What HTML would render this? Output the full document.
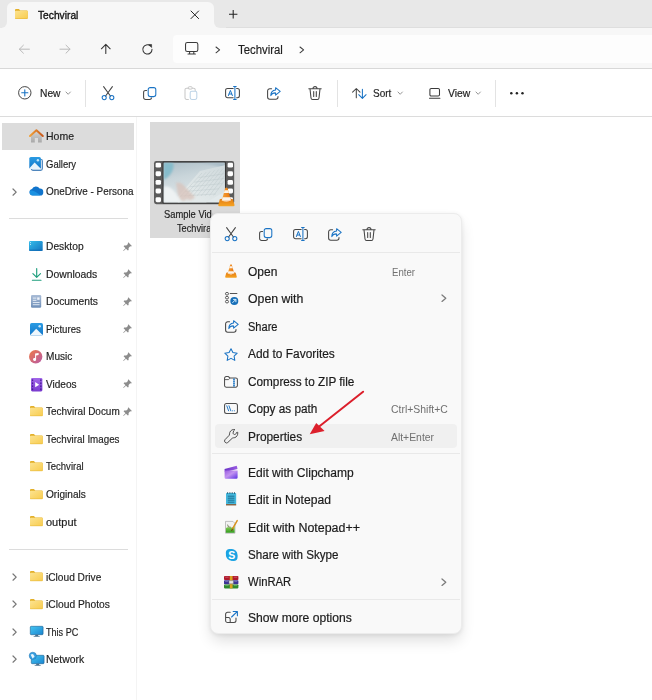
<!DOCTYPE html>
<html><head><meta charset="utf-8"><title>Techviral</title>
<style>
*{box-sizing:border-box;margin:0;padding:0}
html,body{width:652px;height:700px;overflow:hidden;background:#fff}
body{position:relative;font-family:"Liberation Sans",sans-serif;font-size:12px;color:#1b1b1b}
.abs{position:absolute}
.t{position:absolute;white-space:nowrap;line-height:16px;height:16px;transform-origin:0 50%}
svg{position:absolute;overflow:visible}
#titlebar{left:0;top:0;width:652px;height:28px;background:#e8e8e8;border-bottom:1px solid #dedede}
#tab{left:7px;top:2px;width:206.5px;height:26px;background:#f7f7f7;border-radius:6px 6px 0 0}
#nav{left:0;top:28px;width:652px;height:40px;background:#f7f7f7}
#navline{left:0;top:68px;width:652px;height:1px;background:#d8d8d8}
#addr{left:173.4px;top:35.2px;width:479px;height:27.4px;background:#fdfdfd;border-radius:4px 0 0 4px}
#toolline{left:0;top:116px;width:652px;height:1px;background:#dcdcdc}
#sideline{left:136px;top:117px;width:1px;height:583px;background:#f4f4f4}
.sep{position:absolute;height:1px;background:#dcdcdc}
.vsep{position:absolute;width:1px;background:#e3e3e3}
#sel{left:2px;top:122.6px;width:132px;height:27px;background:#dcdcdc}
#tile{left:150px;top:122.4px;width:90.3px;height:115.3px;background:#dadada}
#menu{left:210.3px;top:212.6px;width:251.5px;height:421px;background:#f9f9f9;border-radius:8px;border:1px solid #ececec;box-shadow:0 8px 15px -2px rgba(0,0,0,.14),0 1px 4px rgba(0,0,0,.07)}
#hover{left:215px;top:424px;width:242px;height:24px;background:#f0f0f0;border-radius:4px}
</style></head><body>
<div class="abs" id="titlebar"></div>
<div class="abs" id="tab"></div>
<div class="abs" id="nav"></div>
<div class="abs" id="addr"></div>
<div class="abs" id="navline"></div>
<div class="abs" id="toolline"></div>
<div class="abs" id="sideline"></div>
<div class="abs" id="sel"></div>
<div class="abs" id="tile"></div>
<div class="sep" style="left:9px;top:218px;width:119px"></div>
<div class="sep" style="left:9px;top:549px;width:119px"></div>
<div class="vsep" style="left:85.3px;top:80px;height:27px"></div>
<div class="vsep" style="left:337px;top:80px;height:27px"></div>
<div class="vsep" style="left:495px;top:80px;height:27px"></div>
<svg width="0" height="0" style="position:absolute"><defs><linearGradient id="gFold" x1="0" y1="0" x2="1" y2="1"><stop offset="0" stop-color="#fce391"/><stop offset="1" stop-color="#f8cc4e"/></linearGradient></defs></svg>
<div class="abs" style="left:2px;top:22px;width:5px;height:6px;background:#f7f7f7"></div><div class="abs" style="left:0;top:16px;width:7px;height:12px;background:#e8e8e8;border-radius:0 0 6px 0"></div>
<div class="abs" style="left:213.5px;top:22px;width:6px;height:6px;background:#f7f7f7"></div><div class="abs" style="left:213.5px;top:16px;width:12px;height:12px;background:#e8e8e8;border-radius:0 0 0 6px"></div>
<svg style="left:15.4px;top:9.4px" width="12.7" height="9.8" viewBox="0 0 12.7 9.8" fill="none"><path d="M0 1 A1 1 0 0 1 1 0 H3.9 L5.3 1.5 H11.9 A0.8 0.8 0 0 1 12.7 2.3 V9 A0.8 0.8 0 0 1 11.9 9.8 H0.8 A0.8 0.8 0 0 1 0 9 Z" fill="#e3b02a"/><path d="M0 2.5 A0.8 0.8 0 0 1 0.8 1.7 H11.9 A0.8 0.8 0 0 1 12.7 2.5 V9 A0.8 0.8 0 0 1 11.9 9.8 H0.8 A0.8 0.8 0 0 1 0 9 Z" fill="url(#gFold)"/><path d="M0.3 9.5 H12.4" stroke="#e9bb3c" stroke-width="0.6"/></svg>
<svg style="left:191.4px;top:10.7px" width="7.6" height="7.6" viewBox="0 0 7.6 7.6" fill="none"><path d="M0 0 L7.6 7.6 M7.6 0 L0 7.6" stroke="#222" stroke-width="1" stroke-linecap="round"/></svg>
<svg style="left:229.1px;top:10.4px" width="8.4" height="8.4" viewBox="0 0 8.4 8.4" fill="none"><path d="M4.2 0 V8.4 M0 4.2 H8.4" stroke="#222" stroke-width="1.05"/></svg>
<svg style="left:18.5px;top:44.6px" width="10.4" height="8.4" viewBox="0 0 10.4 8.4" fill="none"><path d="M10.4 4.2 H0.4 M4.4 0.2 L0.4 4.2 L4.4 8.2" stroke="#b9b9b9" stroke-width="1" stroke-linecap="round" stroke-linejoin="round"/></svg>
<svg style="left:59.9px;top:44.6px" width="10.4" height="8.4" viewBox="0 0 10.4 8.4" fill="none"><path d="M0 4.2 H10 M6 0.2 L10 4.2 L6 8.2" stroke="#b9b9b9" stroke-width="1" stroke-linecap="round" stroke-linejoin="round"/></svg>
<svg style="left:101px;top:44.2px" width="9.6" height="9.8" viewBox="0 0 9.6 9.8" fill="none"><path d="M4.8 9.6 V0.5 M0.4 4.8 L4.8 0.4 L9.2 4.8" stroke="#333" stroke-width="1.05" stroke-linecap="round" stroke-linejoin="round"/></svg>
<svg style="left:142.3px;top:43.6px" width="11" height="10.6" viewBox="0 0 11 10.6" fill="none"><path d="M10 5.4 A4.6 4.6 0 1 1 8.2 1.8" stroke="#333" stroke-width="1.05" stroke-linecap="round"/><path d="M6.6 0.5 H9.6 V3.5 Z" fill="#333" stroke="#333" stroke-width="0.6" stroke-linejoin="round"/></svg>
<svg style="left:185px;top:42px" width="13.4" height="12.6" viewBox="0 0 13.4 12.6" fill="none"><rect x="0.55" y="0.55" width="12.3" height="8.9" rx="1.8" stroke="#3a3a3a" stroke-width="1.05"/><path d="M4.6 9.6 V11.8 M8.8 9.6 V11.8 M3 12 H10.4" stroke="#3a3a3a" stroke-width="1.05" stroke-linecap="round"/></svg>
<svg style="left:216px;top:46.7px" width="3.6" height="5.8" viewBox="0 0 3.6 5.8" fill="none"><path d="M0 0 L3.6 2.9 L0 5.8" stroke="#3c3c3c" stroke-width="1.05" stroke-linecap="round" stroke-linejoin="round"/></svg>
<svg style="left:299.6px;top:46.7px" width="3.6" height="5.8" viewBox="0 0 3.6 5.8" fill="none"><path d="M0 0 L3.6 2.9 L0 5.8" stroke="#3c3c3c" stroke-width="1.05" stroke-linecap="round" stroke-linejoin="round"/></svg>
<svg style="left:18.3px;top:86px" width="13.6" height="13.6" viewBox="0 0 13.6 13.6" fill="none"><circle cx="6.8" cy="6.8" r="6.2" stroke="#444" stroke-width="1"/><path d="M6.8 3.7 V9.9 M3.7 6.8 H9.9" stroke="#1a73c4" stroke-width="1.1" stroke-linecap="round"/></svg>
<svg style="left:65.8px;top:92.15px" width="4.4" height="2.3" viewBox="0 0 4.4 2.3" fill="none"><path d="M0 0 L2.2 2.3 L4.4 0" stroke="#8a8a8a" stroke-width="0.9" stroke-linecap="round" stroke-linejoin="round"/></svg>
<svg style="left:101.4px;top:85.8px" width="14" height="14" viewBox="0 0 14 14" fill="none"><path d="M2.6 0.6 L9.6 10.2 M11.4 0.6 L4.4 10.2" stroke="#454545" stroke-width="1.05" stroke-linecap="round"/><circle cx="3.2" cy="11.6" r="2.05" stroke="#1a73c4" stroke-width="1.05"/><circle cx="10.8" cy="11.6" r="2.05" stroke="#1a73c4" stroke-width="1.05"/></svg>
<svg style="left:142.9px;top:86.5px" width="14" height="13" viewBox="0 0 14 13" fill="none"><path d="M3.6 3.4 H2.6 A2 2 0 0 0 0.6 5.4 V10.4 A2 2 0 0 0 2.6 12.4 H6.6 A2 2 0 0 0 8.6 10.9" stroke="#454545" stroke-width="1.05" stroke-linecap="round"/><rect x="5.2" y="0.6" width="7.6" height="9" rx="2" stroke="#1a73c4" stroke-width="1.05"/></svg>
<svg style="left:184.3px;top:86px" width="14" height="14" viewBox="0 0 14 14" fill="none"><path d="M5 2.2 H2.6 A1.6 1.6 0 0 0 1 3.8 V11.8 A1.6 1.6 0 0 0 2.6 13.4 H4.4 M8.4 2.2 H9.6 A1.6 1.6 0 0 1 11.2 3.8 V4.6" stroke="#c9c9c9" stroke-width="1.05" stroke-linecap="round"/><rect x="4.2" y="0.7" width="4" height="2.4" rx="1.1" stroke="#c9c9c9" stroke-width="1"/><rect x="6.2" y="5.2" width="6.6" height="8.2" rx="1.6" stroke="#bdd3e6" stroke-width="1.05"/></svg>
<svg style="left:225px;top:85.8px" width="15" height="14" viewBox="0 0 15 14" fill="none"><path d="M8.2 2.4 H2.6 A2 2 0 0 0 0.6 4.4 V9.8 A2 2 0 0 0 2.6 11.8 H8.2 M11.6 2.4 H12.4 A2 2 0 0 1 14.4 4.4 V9.8 A2 2 0 0 1 12.4 11.8 H11.6" stroke="#454545" stroke-width="1.05" stroke-linecap="round"/><path d="M9.9 0.5 V13.5 M8.6 0.5 H11.2 M8.6 13.5 H11.2" stroke="#1a73c4" stroke-width="1.05" stroke-linecap="round"/><path d="M3.4 9.6 L5.4 4.4 L7.4 9.6 M4.1 8 H6.7" stroke="#1a73c4" stroke-width="1" stroke-linecap="round" stroke-linejoin="round"/></svg>
<svg style="left:267.2px;top:86.9px" width="14" height="13" viewBox="0 0 14 13" fill="none"><path d="M4.6 1.8 H2.8 A2.2 2.2 0 0 0 0.6 4 V10 A2.2 2.2 0 0 0 2.8 12.2 H8.8 A2.2 2.2 0 0 0 11 10 V9.4" stroke="#454545" stroke-width="1.05" stroke-linecap="round"/><path d="M8.6 0.7 L13.2 4.4 L8.6 8.1 V5.9 C6.3 5.8 4.7 6.8 3.8 8.6 C3.9 5.2 5.6 3.1 8.6 2.9 Z" stroke="#1a73c4" stroke-width="1.05" stroke-linejoin="round"/></svg>
<svg style="left:308.4px;top:86px" width="14" height="14" viewBox="0 0 14 14" fill="none"><path d="M0.8 2.8 H13.2 M5 2.6 A2 2 0 0 1 9 2.6 M2 2.9 L3 12 A1.6 1.6 0 0 0 4.6 13.4 H9.4 A1.6 1.6 0 0 0 11 12 L12 2.9 M5.7 5.6 V10.4 M8.3 5.6 V10.4" stroke="#454545" stroke-width="1.05" stroke-linecap="round"/></svg>
<svg style="left:352px;top:87.8px" width="14.6" height="10.8" viewBox="0 0 14.6 10.8" fill="none"><path d="M4.3 9.8 V0.6 M0.6 4.2 L4.3 0.5 L8 4.2" stroke="#454545" stroke-width="1.05" stroke-linecap="round" stroke-linejoin="round"/><path d="M10.4 1.2 V10.3 M6.7 6.7 L10.4 10.4 L14.1 6.7" stroke="#1a73c4" stroke-width="1.05" stroke-linecap="round" stroke-linejoin="round"/></svg>
<svg style="left:397.6px;top:92.15px" width="4.4" height="2.3" viewBox="0 0 4.4 2.3" fill="none"><path d="M0 0 L2.2 2.3 L4.4 0" stroke="#8a8a8a" stroke-width="0.9" stroke-linecap="round" stroke-linejoin="round"/></svg>
<svg style="left:428.8px;top:88.2px" width="11.4" height="11" viewBox="0 0 11.4 11" fill="none"><rect x="0.9" y="0.55" width="9.6" height="7.4" rx="1.3" stroke="#3a3a3a" stroke-width="1.05"/><path d="M0.5 10.2 H10.9" stroke="#3a3a3a" stroke-width="1.05" stroke-linecap="round"/></svg>
<svg style="left:475.6px;top:92.15px" width="4.4" height="2.3" viewBox="0 0 4.4 2.3" fill="none"><path d="M0 0 L2.2 2.3 L4.4 0" stroke="#8a8a8a" stroke-width="0.9" stroke-linecap="round" stroke-linejoin="round"/></svg>
<svg style="left:510.4px;top:92.1px" width="14" height="2.6" viewBox="0 0 14 2.6" fill="none"><circle cx="1.3" cy="1.3" r="1.25" fill="#222"/><circle cx="6.9" cy="1.3" r="1.25" fill="#222"/><circle cx="12.5" cy="1.3" r="1.25" fill="#222"/></svg>
<svg width="0" height="0" style="position:absolute"><defs><linearGradient id="gRoof" x1="0" y1="0" x2="1" y2="0"><stop offset="0" stop-color="#f0a13a"/><stop offset="1" stop-color="#c9581a"/></linearGradient><linearGradient id="gHouse" x1="0" y1="0" x2="0" y2="1"><stop offset="0" stop-color="#d4d4d4"/><stop offset="1" stop-color="#a9a9a9"/></linearGradient><linearGradient id="gDesk" x1="0" y1="0" x2="1" y2="1"><stop offset="0" stop-color="#35bdea"/><stop offset="1" stop-color="#1374c0"/></linearGradient><linearGradient id="gMon" x1="0" y1="0" x2="1" y2="1"><stop offset="0" stop-color="#45c6f2"/><stop offset="1" stop-color="#1b85d0"/></linearGradient><linearGradient id="gMusic" x1="0" y1="0" x2="1" y2="1"><stop offset="0" stop-color="#ee7a45"/><stop offset="1" stop-color="#b85aa8"/></linearGradient><linearGradient id="gPic" x1="0" y1="0" x2="0" y2="1"><stop offset="0" stop-color="#2a9be3"/><stop offset="1" stop-color="#1377c9"/></linearGradient><linearGradient id="gCloud" x1="0" y1="0" x2="1" y2="1"><stop offset="0" stop-color="#1b7fd6"/><stop offset="1" stop-color="#0b59a8"/></linearGradient><linearGradient id="gDoc" x1="0" y1="0" x2="0" y2="1"><stop offset="0" stop-color="#a9bcd6"/><stop offset="1" stop-color="#6f8fb8"/></linearGradient><linearGradient id="gVid" x1="0" y1="0" x2="0" y2="1"><stop offset="0" stop-color="#a267ea"/><stop offset="1" stop-color="#7a3bcf"/></linearGradient></defs></svg>
<svg style="left:28.8px;top:129px" width="14.8" height="14" viewBox="0 0 14.8 14" fill="none"><path d="M2 6.6 V13.4 H5.8 V9 H9 V13.4 H12.8 V6.6 L7.4 2 Z" fill="url(#gHouse)"/><path d="M1 7 L7.4 1.2 L13.8 7" stroke="url(#gRoof)" stroke-width="2" stroke-linecap="round" stroke-linejoin="round"/></svg>
<svg style="left:29px;top:156.8px" width="14" height="14" viewBox="0 0 14 14" fill="none"><rect x="2.3" y="2.3" width="11.1" height="11.1" rx="1.8" fill="#dce8f4" stroke="#4f86bd" stroke-width="1.1"/><rect x="0.3" y="0" width="11.6" height="11.8" rx="1.6" fill="url(#gPic)"/><path d="M0.4 11.2 L5.6 5.6 L11.6 11.4 A1.6 1.6 0 0 1 10.4 12 H1.6 A1.6 1.6 0 0 1 0.4 11.2 Z" fill="#e8f3fb"/><circle cx="8.9" cy="3.2" r="1.2" fill="#bfe3f8"/></svg>
<svg style="left:29px;top:186.4px" width="14.4" height="9.8" viewBox="0 0 14.4 9.8" fill="none"><path d="M3.6 9.6 A3.3 3.3 0 0 1 3 3.1 A4.3 4.3 0 0 1 10.6 2.6 A3.5 3.5 0 0 1 11 9.6 Z" fill="#1074cc"/><path d="M3.6 9.6 A3.3 3.3 0 0 1 1.2 4.4 C4 4.2 8 6 11.6 9.5 Z" fill="#1f9be8" opacity="0.75"/></svg>
<svg style="left:13.4px;top:188.7px" width="3.2" height="6.2" viewBox="0 0 3.2 6.2" fill="none"><path d="M0 0 L3.2 3.1 L0 6.2" stroke="#777" stroke-width="1.25" stroke-linecap="round" stroke-linejoin="round"/></svg>
<svg style="left:29.3px;top:241.4px" width="13.7" height="10.1" viewBox="0 0 13.7 10.1" fill="none"><rect width="13.7" height="10.1" rx="1.3" fill="url(#gDesk)"/><rect x="0" y="8.4" width="13.7" height="1.7" rx="0.8" fill="#0f66b0" opacity="0.55"/><rect x="1.1" y="1.2" width="0.9" height="0.9" fill="#d8f2fc"/><rect x="1.1" y="3" width="0.9" height="0.9" fill="#d8f2fc"/></svg>
<svg style="left:31.8px;top:268px" width="9.4" height="13" viewBox="0 0 9.4 13" fill="none"><path d="M4.7 0.5 V9.2 M0.9 5.6 L4.7 9.4 L8.5 5.6" stroke="#1f9f7e" stroke-width="1.15" stroke-linecap="round" stroke-linejoin="round"/><path d="M0.4 12.3 H9" stroke="#1f9f7e" stroke-width="1.15" stroke-linecap="round"/></svg>
<svg style="left:31.1px;top:295px" width="10.2" height="12.8" viewBox="0 0 10.2 12.8" fill="none"><rect width="10.2" height="12.8" rx="1.2" fill="url(#gDoc)"/><rect x="1.8" y="2.6" width="3.6" height="1" fill="#e6edf6"/><rect x="6.2" y="2.4" width="2.4" height="2.4" fill="#eef3fa"/><rect x="1.8" y="4.8" width="3.6" height="1" fill="#e6edf6"/><rect x="1.8" y="7" width="6.8" height="1" fill="#dbe5f1"/><rect x="1.8" y="9.2" width="6.8" height="1" fill="#dbe5f1"/></svg>
<svg style="left:29.6px;top:322.8px" width="13" height="12.6" viewBox="0 0 13 12.6" fill="none"><rect width="13" height="12.6" rx="1.7" fill="url(#gPic)"/><path d="M0.5 11.8 L6.2 5.8 L12.6 11.9 A1.7 1.7 0 0 1 11.3 12.6 H1.7 A1.7 1.7 0 0 1 0.5 11.8 Z" fill="#eef6fc"/><circle cx="9.7" cy="3.3" r="1.25" fill="#c5e6f9"/></svg>
<svg style="left:29.3px;top:349.5px" width="13.4" height="13.4" viewBox="0 0 13.4 13.4" fill="none"><circle cx="6.7" cy="6.7" r="6.7" fill="url(#gMusic)"/><path d="M6.1 9.2 V3.6 L9.6 2.9 V5 L7.1 5.5 V9.4 A1.55 1.45 0 1 1 6.1 8.1 Z" fill="#fff"/></svg>
<svg style="left:30.5px;top:377.6px" width="11.4" height="13.4" viewBox="0 0 11.4 13.4" fill="none"><rect width="11.4" height="13.4" rx="1.3" fill="url(#gVid)"/><rect x="0.9" y="1.4" width="1.3" height="1.7" fill="#4b1f96"/><rect x="0.9" y="4.4" width="1.3" height="1.7" fill="#4b1f96"/><rect x="0.9" y="7.4" width="1.3" height="1.7" fill="#4b1f96"/><rect x="0.9" y="10.4" width="1.3" height="1.7" fill="#4b1f96"/><rect x="9.2" y="1.4" width="1.3" height="1.7" fill="#4b1f96"/><rect x="9.2" y="4.4" width="1.3" height="1.7" fill="#4b1f96"/><rect x="9.2" y="7.4" width="1.3" height="1.7" fill="#4b1f96"/><rect x="9.2" y="10.4" width="1.3" height="1.7" fill="#4b1f96"/><path d="M4.2 4.1 L8.2 6.7 L4.2 9.3 Z" fill="#fff"/></svg>
<svg style="left:29.9px;top:406px" width="12.7" height="10.1" viewBox="0 0 12.7 10.1" fill="none"><path d="M0 1 A1 1 0 0 1 1 0 H3.9 L5.3 1.5 H11.9 A0.8 0.8 0 0 1 12.7 2.3 V9.3 A0.8 0.8 0 0 1 11.9 10.1 H0.8 A0.8 0.8 0 0 1 0 9.3 Z" fill="#e3b02a"/><path d="M0 2.5 A0.8 0.8 0 0 1 0.8 1.7 H11.9 A0.8 0.8 0 0 1 12.7 2.5 V9.3 A0.8 0.8 0 0 1 11.9 10.1 H0.8 A0.8 0.8 0 0 1 0 9.3 Z" fill="url(#gFold)"/><path d="M0.3 9.8 H12.4" stroke="#e9bb3c" stroke-width="0.6"/></svg>
<svg style="left:29.9px;top:433.5px" width="12.7" height="10.1" viewBox="0 0 12.7 10.1" fill="none"><path d="M0 1 A1 1 0 0 1 1 0 H3.9 L5.3 1.5 H11.9 A0.8 0.8 0 0 1 12.7 2.3 V9.3 A0.8 0.8 0 0 1 11.9 10.1 H0.8 A0.8 0.8 0 0 1 0 9.3 Z" fill="#e3b02a"/><path d="M0 2.5 A0.8 0.8 0 0 1 0.8 1.7 H11.9 A0.8 0.8 0 0 1 12.7 2.5 V9.3 A0.8 0.8 0 0 1 11.9 10.1 H0.8 A0.8 0.8 0 0 1 0 9.3 Z" fill="url(#gFold)"/><path d="M0.3 9.8 H12.4" stroke="#e9bb3c" stroke-width="0.6"/></svg>
<svg style="left:29.9px;top:461px" width="12.7" height="10.1" viewBox="0 0 12.7 10.1" fill="none"><path d="M0 1 A1 1 0 0 1 1 0 H3.9 L5.3 1.5 H11.9 A0.8 0.8 0 0 1 12.7 2.3 V9.3 A0.8 0.8 0 0 1 11.9 10.1 H0.8 A0.8 0.8 0 0 1 0 9.3 Z" fill="#e3b02a"/><path d="M0 2.5 A0.8 0.8 0 0 1 0.8 1.7 H11.9 A0.8 0.8 0 0 1 12.7 2.5 V9.3 A0.8 0.8 0 0 1 11.9 10.1 H0.8 A0.8 0.8 0 0 1 0 9.3 Z" fill="url(#gFold)"/><path d="M0.3 9.8 H12.4" stroke="#e9bb3c" stroke-width="0.6"/></svg>
<svg style="left:29.9px;top:488.5px" width="12.7" height="10.1" viewBox="0 0 12.7 10.1" fill="none"><path d="M0 1 A1 1 0 0 1 1 0 H3.9 L5.3 1.5 H11.9 A0.8 0.8 0 0 1 12.7 2.3 V9.3 A0.8 0.8 0 0 1 11.9 10.1 H0.8 A0.8 0.8 0 0 1 0 9.3 Z" fill="#e3b02a"/><path d="M0 2.5 A0.8 0.8 0 0 1 0.8 1.7 H11.9 A0.8 0.8 0 0 1 12.7 2.5 V9.3 A0.8 0.8 0 0 1 11.9 10.1 H0.8 A0.8 0.8 0 0 1 0 9.3 Z" fill="url(#gFold)"/><path d="M0.3 9.8 H12.4" stroke="#e9bb3c" stroke-width="0.6"/></svg>
<svg style="left:29.9px;top:516.1px" width="12.7" height="10.1" viewBox="0 0 12.7 10.1" fill="none"><path d="M0 1 A1 1 0 0 1 1 0 H3.9 L5.3 1.5 H11.9 A0.8 0.8 0 0 1 12.7 2.3 V9.3 A0.8 0.8 0 0 1 11.9 10.1 H0.8 A0.8 0.8 0 0 1 0 9.3 Z" fill="#e3b02a"/><path d="M0 2.5 A0.8 0.8 0 0 1 0.8 1.7 H11.9 A0.8 0.8 0 0 1 12.7 2.5 V9.3 A0.8 0.8 0 0 1 11.9 10.1 H0.8 A0.8 0.8 0 0 1 0 9.3 Z" fill="url(#gFold)"/><path d="M0.3 9.8 H12.4" stroke="#e9bb3c" stroke-width="0.6"/></svg>
<svg style="left:29.9px;top:571.3px" width="12.7" height="10.1" viewBox="0 0 12.7 10.1" fill="none"><path d="M0 1 A1 1 0 0 1 1 0 H3.9 L5.3 1.5 H11.9 A0.8 0.8 0 0 1 12.7 2.3 V9.3 A0.8 0.8 0 0 1 11.9 10.1 H0.8 A0.8 0.8 0 0 1 0 9.3 Z" fill="#e3b02a"/><path d="M0 2.5 A0.8 0.8 0 0 1 0.8 1.7 H11.9 A0.8 0.8 0 0 1 12.7 2.5 V9.3 A0.8 0.8 0 0 1 11.9 10.1 H0.8 A0.8 0.8 0 0 1 0 9.3 Z" fill="url(#gFold)"/><path d="M0.3 9.8 H12.4" stroke="#e9bb3c" stroke-width="0.6"/></svg>
<svg style="left:29.9px;top:598.8px" width="12.7" height="10.1" viewBox="0 0 12.7 10.1" fill="none"><path d="M0 1 A1 1 0 0 1 1 0 H3.9 L5.3 1.5 H11.9 A0.8 0.8 0 0 1 12.7 2.3 V9.3 A0.8 0.8 0 0 1 11.9 10.1 H0.8 A0.8 0.8 0 0 1 0 9.3 Z" fill="#e3b02a"/><path d="M0 2.5 A0.8 0.8 0 0 1 0.8 1.7 H11.9 A0.8 0.8 0 0 1 12.7 2.5 V9.3 A0.8 0.8 0 0 1 11.9 10.1 H0.8 A0.8 0.8 0 0 1 0 9.3 Z" fill="url(#gFold)"/><path d="M0.3 9.8 H12.4" stroke="#e9bb3c" stroke-width="0.6"/></svg>
<svg style="left:29.5px;top:626px" width="13.4" height="11.2" viewBox="0 0 13.4 11.2" fill="none"><rect x="0.3" y="0.3" width="12.8" height="8.4" rx="0.9" fill="url(#gMon)" stroke="#1a5f92" stroke-width="0.6"/><path d="M5.4 8.8 H8 L8.4 10.3 H5 Z" fill="#4a6f8a"/><rect x="3.6" y="10.2" width="6.2" height="0.9" rx="0.4" fill="#5a7f9a"/></svg>
<svg style="left:30.5px;top:655px" width="13.4" height="11.2" viewBox="0 0 13.4 11.2" fill="none"><rect x="0.3" y="0.3" width="12.8" height="8.4" rx="0.9" fill="url(#gMon)" stroke="#1a5f92" stroke-width="0.6"/><path d="M5.4 8.8 H8 L8.4 10.3 H5 Z" fill="#4a6f8a"/><rect x="3.6" y="10.2" width="6.2" height="0.9" rx="0.4" fill="#5a7f9a"/></svg>
<svg style="left:28.6px;top:652.4px" width="7.6" height="7.6" viewBox="0 0 7.6 7.6" fill="none"><circle cx="3.8" cy="3.8" r="3.6" fill="#3aa0e0" stroke="#1b6fb0" stroke-width="0.5"/><path d="M1.6 2.6 L4 2 L5.6 4.4 L3.6 6.4 Z" fill="#e8f5fd"/></svg>
<svg style="left:13.4px;top:573.9px" width="3.2" height="6.2" viewBox="0 0 3.2 6.2" fill="none"><path d="M0 0 L3.2 3.1 L0 6.2" stroke="#777" stroke-width="1.25" stroke-linecap="round" stroke-linejoin="round"/></svg>
<svg style="left:13.4px;top:601.4px" width="3.2" height="6.2" viewBox="0 0 3.2 6.2" fill="none"><path d="M0 0 L3.2 3.1 L0 6.2" stroke="#777" stroke-width="1.25" stroke-linecap="round" stroke-linejoin="round"/></svg>
<svg style="left:13.4px;top:628.9px" width="3.2" height="6.2" viewBox="0 0 3.2 6.2" fill="none"><path d="M0 0 L3.2 3.1 L0 6.2" stroke="#777" stroke-width="1.25" stroke-linecap="round" stroke-linejoin="round"/></svg>
<svg style="left:13.4px;top:656.4px" width="3.2" height="6.2" viewBox="0 0 3.2 6.2" fill="none"><path d="M0 0 L3.2 3.1 L0 6.2" stroke="#777" stroke-width="1.25" stroke-linecap="round" stroke-linejoin="round"/></svg>
<svg style="left:122.6px;top:241.8px" width="9.2" height="9.2" viewBox="0 0 9.2 9.2" fill="none"><path d="M5.3 0.3 L8.9 3.9 L8 4.4 L7.2 4.2 L5.6 5.9 L5.6 8 L4.9 8.6 L3 6.7 L0.6 9 L0.2 8.6 L2.5 6.2 L0.6 4.3 L1.2 3.6 L3.3 3.6 L5 2 L4.8 1.2 Z" fill="#8c8c8c"/></svg>
<svg style="left:122.6px;top:269.3px" width="9.2" height="9.2" viewBox="0 0 9.2 9.2" fill="none"><path d="M5.3 0.3 L8.9 3.9 L8 4.4 L7.2 4.2 L5.6 5.9 L5.6 8 L4.9 8.6 L3 6.7 L0.6 9 L0.2 8.6 L2.5 6.2 L0.6 4.3 L1.2 3.6 L3.3 3.6 L5 2 L4.8 1.2 Z" fill="#8c8c8c"/></svg>
<svg style="left:122.6px;top:296.8px" width="9.2" height="9.2" viewBox="0 0 9.2 9.2" fill="none"><path d="M5.3 0.3 L8.9 3.9 L8 4.4 L7.2 4.2 L5.6 5.9 L5.6 8 L4.9 8.6 L3 6.7 L0.6 9 L0.2 8.6 L2.5 6.2 L0.6 4.3 L1.2 3.6 L3.3 3.6 L5 2 L4.8 1.2 Z" fill="#8c8c8c"/></svg>
<svg style="left:122.6px;top:324.3px" width="9.2" height="9.2" viewBox="0 0 9.2 9.2" fill="none"><path d="M5.3 0.3 L8.9 3.9 L8 4.4 L7.2 4.2 L5.6 5.9 L5.6 8 L4.9 8.6 L3 6.7 L0.6 9 L0.2 8.6 L2.5 6.2 L0.6 4.3 L1.2 3.6 L3.3 3.6 L5 2 L4.8 1.2 Z" fill="#8c8c8c"/></svg>
<svg style="left:122.6px;top:351.8px" width="9.2" height="9.2" viewBox="0 0 9.2 9.2" fill="none"><path d="M5.3 0.3 L8.9 3.9 L8 4.4 L7.2 4.2 L5.6 5.9 L5.6 8 L4.9 8.6 L3 6.7 L0.6 9 L0.2 8.6 L2.5 6.2 L0.6 4.3 L1.2 3.6 L3.3 3.6 L5 2 L4.8 1.2 Z" fill="#8c8c8c"/></svg>
<svg style="left:122.6px;top:379.3px" width="9.2" height="9.2" viewBox="0 0 9.2 9.2" fill="none"><path d="M5.3 0.3 L8.9 3.9 L8 4.4 L7.2 4.2 L5.6 5.9 L5.6 8 L4.9 8.6 L3 6.7 L0.6 9 L0.2 8.6 L2.5 6.2 L0.6 4.3 L1.2 3.6 L3.3 3.6 L5 2 L4.8 1.2 Z" fill="#8c8c8c"/></svg>
<svg style="left:122.6px;top:406.8px" width="9.2" height="9.2" viewBox="0 0 9.2 9.2" fill="none"><path d="M5.3 0.3 L8.9 3.9 L8 4.4 L7.2 4.2 L5.6 5.9 L5.6 8 L4.9 8.6 L3 6.7 L0.6 9 L0.2 8.6 L2.5 6.2 L0.6 4.3 L1.2 3.6 L3.3 3.6 L5 2 L4.8 1.2 Z" fill="#8c8c8c"/></svg>
<svg width="0" height="0" style="position:absolute"><defs><linearGradient id="gThumb" x1="0" y1="0" x2="0.3" y2="1"><stop offset="0" stop-color="#aebfc8"/><stop offset="0.4" stop-color="#c9d5da"/><stop offset="1" stop-color="#e2e9eb"/></linearGradient><linearGradient id="gKb" x1="0" y1="1" x2="1" y2="0"><stop offset="0" stop-color="#e9eeee"/><stop offset="1" stop-color="#cfd9dc"/></linearGradient><filter id="bl" x="-20%" y="-20%" width="140%" height="140%"><feGaussianBlur stdDeviation="1.1"/></filter><filter id="bl2" x="-20%" y="-20%" width="140%" height="140%"><feGaussianBlur stdDeviation="0.5"/></filter><clipPath id="cpT"><rect x="9.6" y="1.6" width="61.2" height="40"/></clipPath></defs></svg>
<svg style="left:154.4px;top:160.6px" width="80.2" height="43.2" viewBox="0 0 80.2 43.2" fill="none"><rect width="80.2" height="43.2" rx="2.4" fill="#5b5b5b"/><rect x="8.6" y="0.6" width="63.2" height="42" rx="1.2" fill="#2e2e2e"/><rect x="9.6" y="1.6" width="61.2" height="40" fill="url(#gThumb)"/><g clip-path="url(#cpT)"><path d="M9.6 1.6 H19 C21 8 17 15 9.6 19 Z" fill="#86bccb" filter="url(#bl)"/><path d="M20 2 C34 0 60 2 71 8 V1.6 H20 Z" fill="#a9bcc7" filter="url(#bl)"/><path d="M22 38 L46 10 L72 4 V30 L52 41.6 H24 Z" fill="url(#gKb)" filter="url(#bl2)"/><path d="M26 36 L48 12" stroke="#b9c6c8" stroke-width="0.5" opacity="0.8"/><path d="M30.2 35.8 L52.2 11.1" stroke="#b9c6c8" stroke-width="0.5" opacity="0.8"/><path d="M34.4 35.6 L56.4 10.2" stroke="#b9c6c8" stroke-width="0.5" opacity="0.8"/><path d="M38.6 35.4 L60.6 9.3" stroke="#b9c6c8" stroke-width="0.5" opacity="0.8"/><path d="M42.8 35.2 L64.8 8.4" stroke="#b9c6c8" stroke-width="0.5" opacity="0.8"/><path d="M47 35 L69 7.5" stroke="#b9c6c8" stroke-width="0.5" opacity="0.8"/><path d="M51.2 34.8 L73.2 6.6" stroke="#b9c6c8" stroke-width="0.5" opacity="0.8"/><path d="M55.4 34.6 L77.4 5.7" stroke="#b9c6c8" stroke-width="0.5" opacity="0.8"/><path d="M59.6 34.4 L81.6 4.8" stroke="#b9c6c8" stroke-width="0.5" opacity="0.8"/><path d="M27 35 L62 33" stroke="#b9c6c8" stroke-width="0.5" opacity="0.8"/><path d="M31.4 30.4 L65 27.8" stroke="#b9c6c8" stroke-width="0.5" opacity="0.8"/><path d="M35.8 25.8 L68 22.6" stroke="#b9c6c8" stroke-width="0.5" opacity="0.8"/><path d="M40.2 21.2 L71 17.4" stroke="#b9c6c8" stroke-width="0.5" opacity="0.8"/><path d="M44.6 16.6 L74 12.2" stroke="#b9c6c8" stroke-width="0.5" opacity="0.8"/><path d="M22 22 C26 20 30 24 33 28 L41 36 C39 39 35 40 33 38 L30 40 C27 40 25 37 24 34 Z" fill="#d8c2ba" opacity="0.75" filter="url(#bl)"/><path d="M9.6 26 C16 24 22 30 26 41.6 H9.6 Z" fill="#eef2f3" filter="url(#bl)"/></g><rect x="1.6" y="1.7" width="5.4" height="4.9" rx="1.4" fill="#fff"/><rect x="1.6" y="10.3" width="5.4" height="4.9" rx="1.4" fill="#fff"/><rect x="1.6" y="18.9" width="5.4" height="4.9" rx="1.4" fill="#fff"/><rect x="1.6" y="27.6" width="5.4" height="4.9" rx="1.4" fill="#fff"/><rect x="1.6" y="36.3" width="5.4" height="4.9" rx="1.4" fill="#fff"/><rect x="73.6" y="1.7" width="5.4" height="4.9" rx="1.4" fill="#fff"/><rect x="73.6" y="10.3" width="5.4" height="4.9" rx="1.4" fill="#fff"/><rect x="73.6" y="18.9" width="5.4" height="4.9" rx="1.4" fill="#fff"/><rect x="73.6" y="27.6" width="5.4" height="4.9" rx="1.4" fill="#fff"/><rect x="73.6" y="36.3" width="5.4" height="4.9" rx="1.4" fill="#fff"/></svg>
<svg style="left:218px;top:187px" width="16.8" height="19.6" viewBox="0 0 12 14" fill="none"><path d="M1.3 8.7 Q6 7.2 10.7 8.7 L11.8 12.8 Q11.9 13.8 11 13.8 H1 Q0.1 13.8 0.2 12.8 Z" fill="url(#gBase)"/><path d="M5.2 0.7 Q6 -0.1 6.8 0.7 L9.35 9.8 Q6 11.6 2.65 9.8 Z" fill="url(#gVlc)"/><path d="M4.73 2.30 L7.27 2.30 L7.83 4.30 L4.17 4.30 Z" fill="#fbf3ea"/><path d="M3.34 7.30 L8.66 7.30 L9.30 9.60 L2.70 9.60 Z" fill="#fbf3ea"/><path d="M2.70 9.6 Q6 11.2 9.30 9.6 L2.70 9.6 Z" fill="#fbf3ea"/></svg>
<span class="t" style="left:37.6px;top:6.8px;font-size:11.5px;color:#111;transform:scaleX(0.890);-webkit-text-stroke:0.35px #111;">Techviral</span>
<span class="t" style="left:237.5px;top:41.5px;font-size:12.5px;color:#1f1f1f;transform:scaleX(0.910);-webkit-text-stroke:0.18px #1f1f1f;">Techviral</span>
<span class="t" style="left:39.5px;top:85.0px;font-size:10.5px;color:#1f1f1f;transform:scaleX(0.975);-webkit-text-stroke:0.18px #1f1f1f;">New</span>
<span class="t" style="left:372.8px;top:85.0px;font-size:10.5px;color:#1f1f1f;transform:scaleX(0.955);-webkit-text-stroke:0.18px #1f1f1f;">Sort</span>
<span class="t" style="left:448.1px;top:85.0px;font-size:10.5px;color:#1f1f1f;transform:scaleX(0.988);-webkit-text-stroke:0.18px #1f1f1f;">View</span>
<span class="t" style="left:46.1px;top:128.0px;font-size:10.5px;color:#1f1f1f;transform:scaleX(0.999);-webkit-text-stroke:0.18px #1f1f1f;">Home</span>
<span class="t" style="left:46.1px;top:156.0px;font-size:10.5px;color:#1f1f1f;transform:scaleX(0.905);-webkit-text-stroke:0.18px #1f1f1f;">Gallery</span>
<span class="t" style="left:46.1px;top:183.0px;font-size:10.5px;color:#1f1f1f;transform:scaleX(0.943);-webkit-text-stroke:0.18px #1f1f1f;">OneDrive - Persona</span>
<span class="t" style="left:46.1px;top:238.0px;font-size:10.5px;color:#1f1f1f;transform:scaleX(0.976);-webkit-text-stroke:0.18px #1f1f1f;">Desktop</span>
<span class="t" style="left:46.1px;top:266.0px;font-size:10.5px;color:#1f1f1f;transform:scaleX(0.986);-webkit-text-stroke:0.18px #1f1f1f;">Downloads</span>
<span class="t" style="left:46.1px;top:293.0px;font-size:10.5px;color:#1f1f1f;transform:scaleX(0.979);-webkit-text-stroke:0.18px #1f1f1f;">Documents</span>
<span class="t" style="left:46.1px;top:321.0px;font-size:10.5px;color:#1f1f1f;transform:scaleX(0.920);-webkit-text-stroke:0.18px #1f1f1f;">Pictures</span>
<span class="t" style="left:46.1px;top:348.0px;font-size:10.5px;color:#1f1f1f;transform:scaleX(0.959);-webkit-text-stroke:0.18px #1f1f1f;">Music</span>
<span class="t" style="left:46.1px;top:376.0px;font-size:10.5px;color:#1f1f1f;transform:scaleX(0.959);-webkit-text-stroke:0.18px #1f1f1f;">Videos</span>
<span class="t" style="left:46.1px;top:403.0px;font-size:10.5px;color:#1f1f1f;transform:scaleX(0.950);-webkit-text-stroke:0.18px #1f1f1f;">Techviral Docum</span>
<span class="t" style="left:46.1px;top:431.0px;font-size:10.5px;color:#1f1f1f;transform:scaleX(0.933);-webkit-text-stroke:0.18px #1f1f1f;">Techviral Images</span>
<span class="t" style="left:46.1px;top:458.0px;font-size:10.5px;color:#1f1f1f;transform:scaleX(0.907);-webkit-text-stroke:0.18px #1f1f1f;">Techviral</span>
<span class="t" style="left:46.1px;top:486.0px;font-size:10.5px;color:#1f1f1f;transform:scaleX(0.960);-webkit-text-stroke:0.18px #1f1f1f;">Originals</span>
<span class="t" style="left:46.1px;top:514.0px;font-size:10.5px;color:#1f1f1f;transform:scaleX(1.048);-webkit-text-stroke:0.18px #1f1f1f;">output</span>
<span class="t" style="left:46.1px;top:569.0px;font-size:10.5px;color:#1f1f1f;transform:scaleX(0.967);-webkit-text-stroke:0.18px #1f1f1f;">iCloud Drive</span>
<span class="t" style="left:46.1px;top:596.0px;font-size:10.5px;color:#1f1f1f;transform:scaleX(0.977);-webkit-text-stroke:0.18px #1f1f1f;">iCloud Photos</span>
<span class="t" style="left:46.1px;top:624.0px;font-size:10.5px;color:#1f1f1f;transform:scaleX(0.865);-webkit-text-stroke:0.18px #1f1f1f;">This PC</span>
<span class="t" style="left:46.1px;top:651.0px;font-size:10.5px;color:#1f1f1f;transform:scaleX(0.989);-webkit-text-stroke:0.18px #1f1f1f;">Network</span>
<span class="t" style="left:164.0px;top:206.2px;font-size:10.5px;color:#1f1f1f;transform:scaleX(0.894);-webkit-text-stroke:0.18px #1f1f1f;clip-path:inset(0 11.4px 0 0);">Sample Video</span>
<span class="t" style="left:176.9px;top:219.6px;font-size:10.5px;color:#1f1f1f;transform:scaleX(0.876);-webkit-text-stroke:0.18px #1f1f1f;">Techviral</span>
<div class="abs" id="menu"></div>
<div class="abs" id="hover"></div>
<div class="sep" style="left:212px;top:252px;width:248px;background:#e9e9e9"></div>
<div class="sep" style="left:212px;top:453px;width:248px;background:#e9e9e9"></div>
<div class="sep" style="left:212px;top:599px;width:248px;background:#e9e9e9"></div>
<svg width="0" height="0" style="position:absolute"><defs><linearGradient id="gClip" x1="0" y1="0" x2="1" y2="1"><stop offset="0" stop-color="#9a5ce0"/><stop offset="0.45" stop-color="#c293f0"/><stop offset="1" stop-color="#5a30e4"/></linearGradient><linearGradient id="gClipT" x1="0" y1="0" x2="1" y2="0"><stop offset="0" stop-color="#6a34c6"/><stop offset="1" stop-color="#9a5ce2"/></linearGradient><linearGradient id="gNpp" x1="0" y1="0" x2="0" y2="1"><stop offset="0" stop-color="#8fd35a"/><stop offset="1" stop-color="#2f9a1d"/></linearGradient><linearGradient id="gVlc" x1="0" y1="0" x2="1" y2="0"><stop offset="0" stop-color="#f5a33a"/><stop offset="1" stop-color="#e8730c"/></linearGradient><linearGradient id="gBase" x1="0" y1="0" x2="0" y2="1"><stop offset="0" stop-color="#e27812"/><stop offset="1" stop-color="#f6a524"/></linearGradient></defs></svg>
<svg style="left:224.3px;top:226.9px" width="14" height="14" viewBox="0 0 14 14" fill="none"><path d="M2.6 0.6 L9.6 10.2 M11.4 0.6 L4.4 10.2" stroke="#454545" stroke-width="1.05" stroke-linecap="round"/><circle cx="3.2" cy="11.6" r="2.05" stroke="#1a73c4" stroke-width="1.05"/><circle cx="10.8" cy="11.6" r="2.05" stroke="#1a73c4" stroke-width="1.05"/></svg>
<svg style="left:258.7px;top:227.5px" width="14" height="13" viewBox="0 0 14 13" fill="none"><path d="M3.6 3.4 H2.6 A2 2 0 0 0 0.6 5.4 V10.4 A2 2 0 0 0 2.6 12.4 H6.6 A2 2 0 0 0 8.6 10.9" stroke="#454545" stroke-width="1.05" stroke-linecap="round"/><rect x="5.2" y="0.6" width="7.6" height="9" rx="2" stroke="#1a73c4" stroke-width="1.05"/></svg>
<svg style="left:292.7px;top:226.8px" width="15" height="14" viewBox="0 0 15 14" fill="none"><path d="M8.2 2.4 H2.6 A2 2 0 0 0 0.6 4.4 V9.8 A2 2 0 0 0 2.6 11.8 H8.2 M11.6 2.4 H12.4 A2 2 0 0 1 14.4 4.4 V9.8 A2 2 0 0 1 12.4 11.8 H11.6" stroke="#454545" stroke-width="1.05" stroke-linecap="round"/><path d="M9.9 0.5 V13.5 M8.6 0.5 H11.2 M8.6 13.5 H11.2" stroke="#1a73c4" stroke-width="1.05" stroke-linecap="round"/><path d="M3.4 9.6 L5.4 4.4 L7.4 9.6 M4.1 8 H6.7" stroke="#1a73c4" stroke-width="1" stroke-linecap="round" stroke-linejoin="round"/></svg>
<svg style="left:327.6px;top:227.8px" width="14" height="13" viewBox="0 0 14 13" fill="none"><path d="M4.6 1.8 H2.8 A2.2 2.2 0 0 0 0.6 4 V10 A2.2 2.2 0 0 0 2.8 12.2 H8.8 A2.2 2.2 0 0 0 11 10 V9.4" stroke="#454545" stroke-width="1.05" stroke-linecap="round"/><path d="M8.6 0.7 L13.2 4.4 L8.6 8.1 V5.9 C6.3 5.8 4.7 6.8 3.8 8.6 C3.9 5.2 5.6 3.1 8.6 2.9 Z" stroke="#1a73c4" stroke-width="1.05" stroke-linejoin="round"/></svg>
<svg style="left:361.8px;top:227px" width="14" height="14" viewBox="0 0 14 14" fill="none"><path d="M0.8 2.8 H13.2 M5 2.6 A2 2 0 0 1 9 2.6 M2 2.9 L3 12 A1.6 1.6 0 0 0 4.6 13.4 H9.4 A1.6 1.6 0 0 0 11 12 L12 2.9 M5.7 5.6 V10.4 M8.3 5.6 V10.4" stroke="#454545" stroke-width="1.05" stroke-linecap="round"/></svg>
<svg style="left:225.4px;top:264px" width="12" height="14" viewBox="0 0 12 14" fill="none"><path d="M1.3 8.7 Q6 7.2 10.7 8.7 L11.8 12.8 Q11.9 13.8 11 13.8 H1 Q0.1 13.8 0.2 12.8 Z" fill="url(#gBase)"/><path d="M5.2 0.7 Q6 -0.1 6.8 0.7 L9.35 9.8 Q6 11.6 2.65 9.8 Z" fill="url(#gVlc)"/><path d="M4.73 2.30 L7.27 2.30 L7.83 4.30 L4.17 4.30 Z" fill="#fbf3ea"/><path d="M3.34 7.30 L8.66 7.30 L9.30 9.60 L2.70 9.60 Z" fill="#fbf3ea"/><path d="M2.70 9.6 Q6 11.2 9.30 9.6 L2.70 9.6 Z" fill="#fbf3ea"/></svg>
<svg style="left:224.9px;top:292.4px" width="13.6" height="13.4" viewBox="0 0 13.6 13.4" fill="none"><ellipse cx="2" cy="1.75" rx="1.55" ry="1.35" stroke="#555" stroke-width="0.95"/><ellipse cx="2" cy="5.7" rx="1.55" ry="1.35" stroke="#555" stroke-width="0.95"/><ellipse cx="2" cy="9.65" rx="1.55" ry="1.35" stroke="#555" stroke-width="0.95"/><path d="M5.2 1.55 H11.9" stroke="#555" stroke-width="1.05" stroke-linecap="round"/><circle cx="9.3" cy="9" r="4" fill="#176fb8"/><path d="M7.7 10.6 L10.8 7.5 M8.5 7.4 H10.9 V9.8" stroke="#d9efff" stroke-width="1" stroke-linecap="round" stroke-linejoin="round"/></svg>
<svg style="left:224.5px;top:320.1px" width="14" height="13" viewBox="0 0 14 13" fill="none"><path d="M4.6 1.8 H2.8 A2.2 2.2 0 0 0 0.6 4 V10 A2.2 2.2 0 0 0 2.8 12.2 H8.8 A2.2 2.2 0 0 0 11 10 V9.4" stroke="#454545" stroke-width="1.05" stroke-linecap="round"/><path d="M8.6 0.7 L13.2 4.4 L8.6 8.1 V5.9 C6.3 5.8 4.7 6.8 3.8 8.6 C3.9 5.2 5.6 3.1 8.6 2.9 Z" stroke="#1a73c4" stroke-width="1.05" stroke-linejoin="round"/></svg>
<svg style="left:224.4px;top:347.6px" width="14" height="12.8" viewBox="0 0 14 12.8" fill="none"><path d="M7 0.7 L8.9 4.6 L13.2 5.2 L10.1 8.2 L10.8 12.4 L7 10.4 L3.2 12.4 L3.9 8.2 L0.8 5.2 L5.1 4.6 Z" stroke="#1a73c4" stroke-width="1.05" stroke-linejoin="round"/></svg>
<svg style="left:224.4px;top:375.6px" width="14" height="11.8" viewBox="0 0 14 11.8" fill="none"><path d="M0.55 2.2 A1.6 1.6 0 0 1 2.15 0.6 H4.4 L5.9 2 H11.8 A1.6 1.6 0 0 1 13.4 3.6 V9.6 A1.6 1.6 0 0 1 11.8 11.2 H2.15 A1.6 1.6 0 0 1 0.55 9.6 Z" stroke="#4f4f4f" stroke-width="1.05" stroke-linejoin="round"/><path d="M0.8 3.6 H4.6 L5.9 2.2" stroke="#4f4f4f" stroke-width="0.9"/><path d="M10 2.2 V11 M9.2 3.6 H10.8 M9.2 5.6 H10.8 M9.2 7.6 H10.8 M9.2 9.6 H10.8" stroke="#1a73c4" stroke-width="0.9"/></svg>
<svg style="left:224.4px;top:403.4px" width="14" height="11" viewBox="0 0 14 11" fill="none"><rect x="0.55" y="0.55" width="12.9" height="9.9" rx="2" stroke="#4f4f4f" stroke-width="1.05"/><path d="M2.8 2.8 L4.6 7.8 M5 2.8 L6.8 7.8" stroke="#1a73c4" stroke-width="0.95" stroke-linecap="round"/><circle cx="8.6" cy="7.7" r="0.55" fill="#1a73c4"/><circle cx="10.4" cy="7.7" r="0.55" fill="#1a73c4"/></svg>
<svg style="left:224px;top:428.9px" width="14.4" height="14.4" viewBox="0 0 14.4 14.4" fill="none"><path d="M10.9 0.55 C9 0.1 6.6 1.2 5.8 3.4 C5.5 4.4 5.6 5.4 5.3 6.2 L0.95 10.75 A2 2 0 0 0 3.75 13.55 L8.3 9.2 C9 8.7 10 8.8 10.8 8.6 C12.6 8.1 14 6.2 13.8 3.3 L12.5 3.5 C12.4 4.6 11.6 5.5 10.6 5.5 C9.6 5.4 9 4.7 9.1 3.9 L9.7 1.7 Z" stroke="#4d4d4d" stroke-width="1" stroke-linejoin="round"/></svg>
<svg style="left:224.4px;top:464.8px" width="14" height="13.8" viewBox="0 0 14 13.8" fill="none"><path d="M0.5 3.9 L11.9 0.9 A0.9 0.9 0 0 1 13 1.5 L13.5 4 L0.9 7 Z" fill="url(#gClipT)"/><path d="M0.6 5.6 H13.6 V12.4 A1.4 1.4 0 0 1 12.2 13.8 H2 A1.4 1.4 0 0 1 0.6 12.4 Z" fill="url(#gClip)"/></svg>
<svg style="left:226.3px;top:492.2px" width="10.2" height="13.6" viewBox="0 0 10.2 13.6" fill="none"><rect x="0" y="1.1" width="10.2" height="11.3" rx="0.8" fill="#44b7dc"/><rect x="0" y="12.2" width="10.2" height="1.2" fill="#7a4a22"/><path d="M1.6 0.2 V1.8 M3.9 0.2 V1.8 M6.2 0.2 V1.8 M8.5 0.2 V1.8" stroke="#1f4f66" stroke-width="0.9"/><path d="M1.8 4.2 H8.4 M1.8 6.2 H8.4 M1.8 8.2 H8.4 M1.8 10.2 H8.4" stroke="#186a8c" stroke-width="0.9"/></svg>
<svg style="left:225px;top:519.8px" width="13" height="13.8" viewBox="0 0 13 13.8" fill="none"><path d="M0.5 1.4 H8 L10 3.4 V13.2 H0.5 Z" fill="#f3f3f3" stroke="#a9a9a9" stroke-width="0.7"/><path d="M0.9 8.2 C3 5.6 5 9 9.6 6.4 V12.8 H0.9 Z" fill="url(#gNpp)"/><path d="M2.6 4.6 L3.4 7 L5.8 7.2" stroke="#5b6b3a" stroke-width="0.8" fill="none"/><path d="M12.2 0.6 L7.2 9.4" stroke="#d9921e" stroke-width="1.5" stroke-linecap="round"/><path d="M7.3 9.2 L6.8 10.6" stroke="#5a3b12" stroke-width="1" stroke-linecap="round"/></svg>
<svg style="left:224.8px;top:547.7px" width="13.4" height="13.8" viewBox="0 0 13.4 13.8" fill="none"><circle cx="4.8" cy="4.9" r="4" fill="#1ba3e3"/><circle cx="8.6" cy="8.9" r="4" fill="#1ba3e3"/><circle cx="6.7" cy="6.9" r="5.8" fill="#1ba3e3"/><text x="6.7" y="10.7" font-family="Liberation Sans, sans-serif" font-weight="bold" font-size="10.5" fill="#fff" text-anchor="middle">S</text></svg>
<svg style="left:224px;top:575.6px" width="14.4" height="12.4" viewBox="0 0 14.4 12.4" fill="none"><rect x="0" y="0" width="14.4" height="4" rx="0.8" fill="#b0182c"/><rect x="0" y="4.2" width="14.4" height="4" rx="0.8" fill="#3c3596"/><rect x="0" y="8.4" width="14.4" height="4" rx="0.8" fill="#2c8a2a"/><rect x="5.8" y="0" width="2.8" height="12.4" fill="#d9a31e"/><rect x="5" y="4.6" width="4.4" height="3.2" rx="0.6" fill="#e6e6e6" stroke="#777" stroke-width="0.5"/><path d="M1.2 1.2 H4.6 M9.8 1.2 H13.2 M1.2 5.4 H4 M10.4 5.4 H13.2 M1.2 9.6 H4.6 M9.8 9.6 H13.2" stroke="#fff" stroke-opacity="0.35" stroke-width="0.8"/></svg>
<svg style="left:225.2px;top:611.2px" width="13" height="12.2" viewBox="0 0 13 12.2" fill="none"><path d="M5.2 1.2 H2.6 A2 2 0 0 0 0.6 3.2 V9.6 A2 2 0 0 0 2.6 11.6 H9 A2 2 0 0 0 11 9.6 V7" stroke="#4a4a4a" stroke-width="1.05" stroke-linecap="round"/><path d="M0.8 6.6 H3.6 A1.6 1.6 0 0 1 5.2 8.2 V11.4" stroke="#4a4a4a" stroke-width="1.05"/><path d="M6.6 6 L12.2 0.6 M8.2 0.55 H12.4 V4.8" stroke="#1a73c4" stroke-width="1.1" stroke-linecap="round" stroke-linejoin="round"/></svg>
<svg style="left:441.7px;top:295.4px" width="3.8" height="6.4" viewBox="0 0 3.8 6.4" fill="none"><path d="M0 0 L3.8 3.2 L0 6.4" stroke="#7c7c7c" stroke-width="1.3" stroke-linecap="round" stroke-linejoin="round"/></svg>
<svg style="left:441.7px;top:578.8px" width="3.8" height="6.4" viewBox="0 0 3.8 6.4" fill="none"><path d="M0 0 L3.8 3.2 L0 6.4" stroke="#7c7c7c" stroke-width="1.3" stroke-linecap="round" stroke-linejoin="round"/></svg>
<svg style="left:300px;top:385px" width="70" height="55" viewBox="0 0 70 55" fill="none"><path d="M63.1 6.7 L16 44" stroke="#dc1f2b" stroke-width="2" stroke-linecap="round"/><path d="M9.7 49.3 L16.2 37.9 L24.6 45.9 Z" fill="#dc1f2b"/></svg>
<span class="t" style="left:247.6px;top:264.0px;font-size:12.5px;color:#1b1b1b;transform:scaleX(0.958);-webkit-text-stroke:0.2px #1b1b1b;">Open</span>
<span class="t" style="left:247.6px;top:291.0px;font-size:12.5px;color:#1b1b1b;transform:scaleX(0.983);-webkit-text-stroke:0.2px #1b1b1b;">Open with</span>
<span class="t" style="left:247.6px;top:319.0px;font-size:12.5px;color:#1b1b1b;transform:scaleX(0.884);-webkit-text-stroke:0.2px #1b1b1b;">Share</span>
<span class="t" style="left:247.6px;top:346.0px;font-size:12.5px;color:#1b1b1b;transform:scaleX(0.954);-webkit-text-stroke:0.2px #1b1b1b;">Add to Favorites</span>
<span class="t" style="left:247.6px;top:374.0px;font-size:12.5px;color:#1b1b1b;transform:scaleX(0.941);-webkit-text-stroke:0.2px #1b1b1b;">Compress to ZIP file</span>
<span class="t" style="left:247.6px;top:401.0px;font-size:12.5px;color:#1b1b1b;transform:scaleX(0.942);-webkit-text-stroke:0.2px #1b1b1b;">Copy as path</span>
<span class="t" style="left:247.6px;top:429.0px;font-size:12.5px;color:#1b1b1b;transform:scaleX(0.951);-webkit-text-stroke:0.2px #1b1b1b;">Properties</span>
<span class="t" style="left:247.6px;top:465.0px;font-size:12.5px;color:#1b1b1b;transform:scaleX(0.963);-webkit-text-stroke:0.2px #1b1b1b;">Edit with Clipchamp</span>
<span class="t" style="left:247.6px;top:492.0px;font-size:12.5px;color:#1b1b1b;transform:scaleX(0.970);-webkit-text-stroke:0.2px #1b1b1b;">Edit in Notepad</span>
<span class="t" style="left:247.6px;top:520.0px;font-size:12.5px;color:#1b1b1b;transform:scaleX(0.994);-webkit-text-stroke:0.2px #1b1b1b;">Edit with Notepad++</span>
<span class="t" style="left:247.6px;top:547.0px;font-size:12.5px;color:#1b1b1b;transform:scaleX(0.930);-webkit-text-stroke:0.2px #1b1b1b;">Share with Skype</span>
<span class="t" style="left:247.6px;top:574.0px;font-size:12.5px;color:#1b1b1b;transform:scaleX(0.901);-webkit-text-stroke:0.2px #1b1b1b;">WinRAR</span>
<span class="t" style="left:247.6px;top:610.0px;font-size:12.5px;color:#1b1b1b;transform:scaleX(0.970);-webkit-text-stroke:0.2px #1b1b1b;">Show more options</span>
<span class="t" style="left:391.5px;top:264.0px;font-size:11px;color:#707070;transform:scaleX(0.875);">Enter</span>
<span class="t" style="left:391.3px;top:401.0px;font-size:11px;color:#707070;transform:scaleX(0.948);">Ctrl+Shift+C</span>
<span class="t" style="left:391.3px;top:429.0px;font-size:11px;color:#707070;transform:scaleX(0.944);">Alt+Enter</span>
</body></html>
